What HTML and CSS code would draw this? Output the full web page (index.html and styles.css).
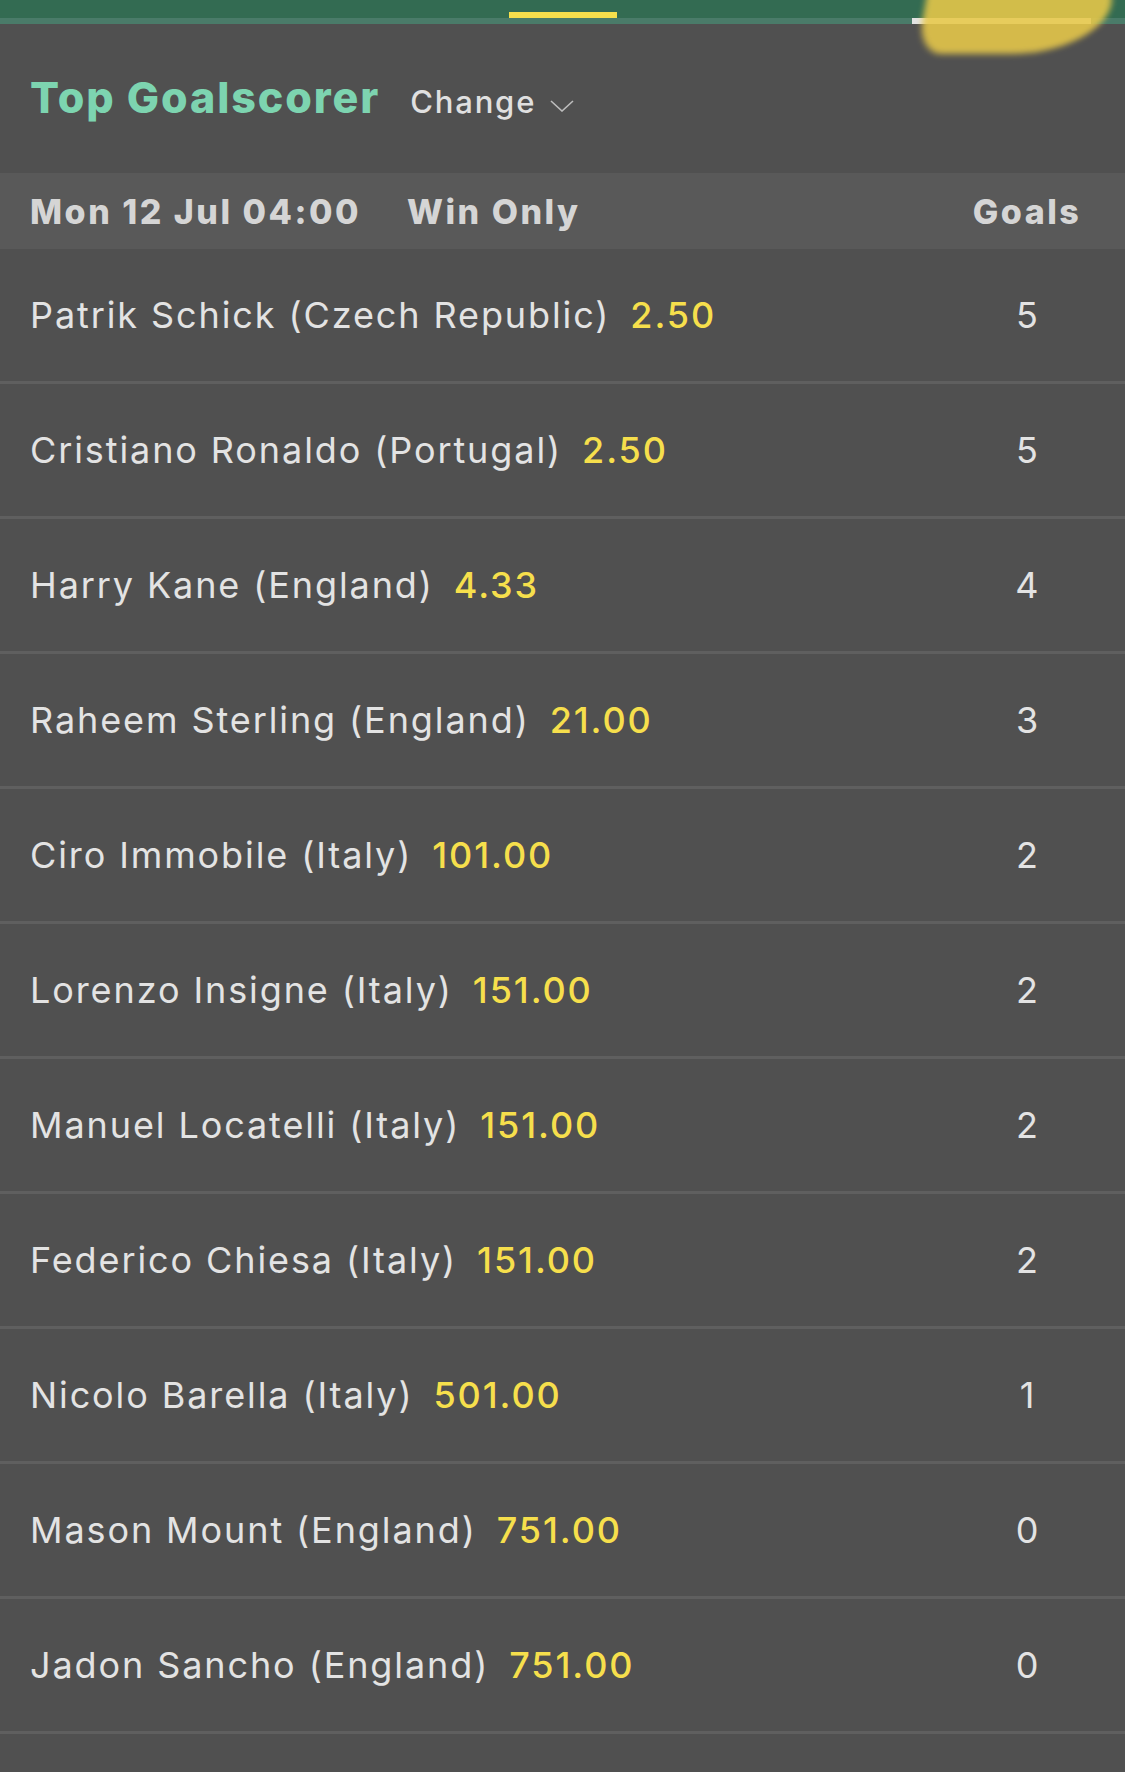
FILE: index.html
```html
<!DOCTYPE html>
<html lang="en">
<head>
<meta charset="utf-8">
<title>Top Goalscorer</title>
<link rel="stylesheet" href="styles.css">
</head>
<body>
<div class="page">
  <div class="topbar">
    <div class="tab-indicator"></div>
  </div>
  <div class="strip">
    <div class="strip-indicator"></div>
  </div>
  <div class="blob"></div>

  <div class="title-bar">
    <h1 class="title">Top Goalscorer</h1>
    <span class="change">Change
      <svg class="chevron" viewBox="0 0 24 12" width="24" height="12"><path d="M1 1 L12 11 L23 1" fill="none" stroke="#bdbdbd" stroke-width="1.6"/></svg>
    </span>
  </div>

  <div class="market-head">
    <span class="date">Mon 12 Jul 04:00</span>
    <span class="type">Win Only</span>
    <span class="goals-head">Goals</span>
  </div>

  <ul class="list">
    <li class="row"><div class="sel"><span class="name">Patrik Schick (Czech Republic)</span><span class="odds">2.50</span></div><span class="goals">5</span></li>
    <li class="row"><div class="sel"><span class="name">Cristiano Ronaldo (Portugal)</span><span class="odds">2.50</span></div><span class="goals">5</span></li>
    <li class="row"><div class="sel"><span class="name">Harry Kane (England)</span><span class="odds">4.33</span></div><span class="goals">4</span></li>
    <li class="row"><div class="sel"><span class="name">Raheem Sterling (England)</span><span class="odds">21.00</span></div><span class="goals">3</span></li>
    <li class="row"><div class="sel"><span class="name">Ciro Immobile (Italy)</span><span class="odds">101.00</span></div><span class="goals">2</span></li>
    <li class="row"><div class="sel"><span class="name">Lorenzo Insigne (Italy)</span><span class="odds">151.00</span></div><span class="goals">2</span></li>
    <li class="row"><div class="sel"><span class="name">Manuel Locatelli (Italy)</span><span class="odds">151.00</span></div><span class="goals">2</span></li>
    <li class="row"><div class="sel"><span class="name">Federico Chiesa (Italy)</span><span class="odds">151.00</span></div><span class="goals">2</span></li>
    <li class="row"><div class="sel"><span class="name">Nicolo Barella (Italy)</span><span class="odds">501.00</span></div><span class="goals">1</span></li>
    <li class="row"><div class="sel"><span class="name">Mason Mount (England)</span><span class="odds">751.00</span></div><span class="goals">0</span></li>
    <li class="row"><div class="sel"><span class="name">Jadon Sancho (England)</span><span class="odds">751.00</span></div><span class="goals">0</span></li>
  </ul>
</div>
</body>
</html>
```

FILE: styles.css
```css
* { box-sizing: border-box; }

html, body {
  margin: 0;
  padding: 0;
  background: #505050;
}

body {
  font-family: Inter, "Noto Sans", "Liberation Sans", sans-serif;
  color: #e3e3e3;
}

.page {
  position: relative;
  width: 1125px;
  min-height: 1772px;
  background: #505050;
  overflow: hidden;
}

.topbar {
  height: 18px;
  background: #336b52;
  display: flex;
  align-items: flex-end;
}

.tab-indicator {
  margin-left: 509px;
  width: 108px;
  height: 6px;
  background: #f6df4c;
}

.strip {
  height: 6px;
  background: #4a7b69;
  display: flex;
}

.strip-indicator {
  margin-left: 912px;
  width: 179px;
  height: 6px;
  background: #e2e2e2;
}

.blob {
  position: absolute;
  left: 924px;
  top: -30px;
  width: 186px;
  height: 84px;
  background: #e8c94a;
  opacity: 0.88;
  border-radius: 8px 60px 110px 30px / 8px 40px 60px 40px;
  filter: blur(3px);
  transform: skewX(-10deg);
}

.title-bar {
  height: 149px;
  display: flex;
  align-items: baseline;
  padding: 47px 0 0 30px;
}

.title {
  margin: 0;
  font-size: 43px;
  font-weight: 800;
  color: #7dd4b0;
  letter-spacing: 1.9px;
}

.change {
  margin-left: 30px;
  font-size: 31px;
  font-weight: 500;
  color: #e0e0e0;
  letter-spacing: 1.8px;
  display: inline-flex;
  align-items: baseline;
}

.chevron {
  margin-left: 14px;
  align-self: center;
  position: relative;
  top: 4px;
}

.market-head {
  height: 76px;
  background: #595959;
  display: flex;
  align-items: center;
  padding-left: 30px;
  font-size: 34px;
  font-weight: 800;
  color: #d5d5d5;
  letter-spacing: 2.5px;
}

.type {
  margin-left: 46px;
}

.goals-head {
  margin-left: auto;
  width: 120px;
  margin-right: 38px;
  text-align: center;
}

.list {
  list-style: none;
  margin: 0;
  padding: 0;
}

.row {
  height: 135px;
  border-bottom: 3px solid #5f5f5f;
  display: flex;
  align-items: center;
  padding-left: 30px;
  font-size: 36px;
  letter-spacing: 1.9px;
}

.sel {
  display: flex;
  align-items: baseline;
  gap: 20px;
}

.name {
  color: #e3e3e3;
}

.odds {
  color: #f6df4c;
  font-weight: 500;
}

.goals {
  margin-left: auto;
  width: 106px;
  margin-right: 45px;
  text-align: center;
  color: #e3e3e3;
  letter-spacing: 0;
}
```
